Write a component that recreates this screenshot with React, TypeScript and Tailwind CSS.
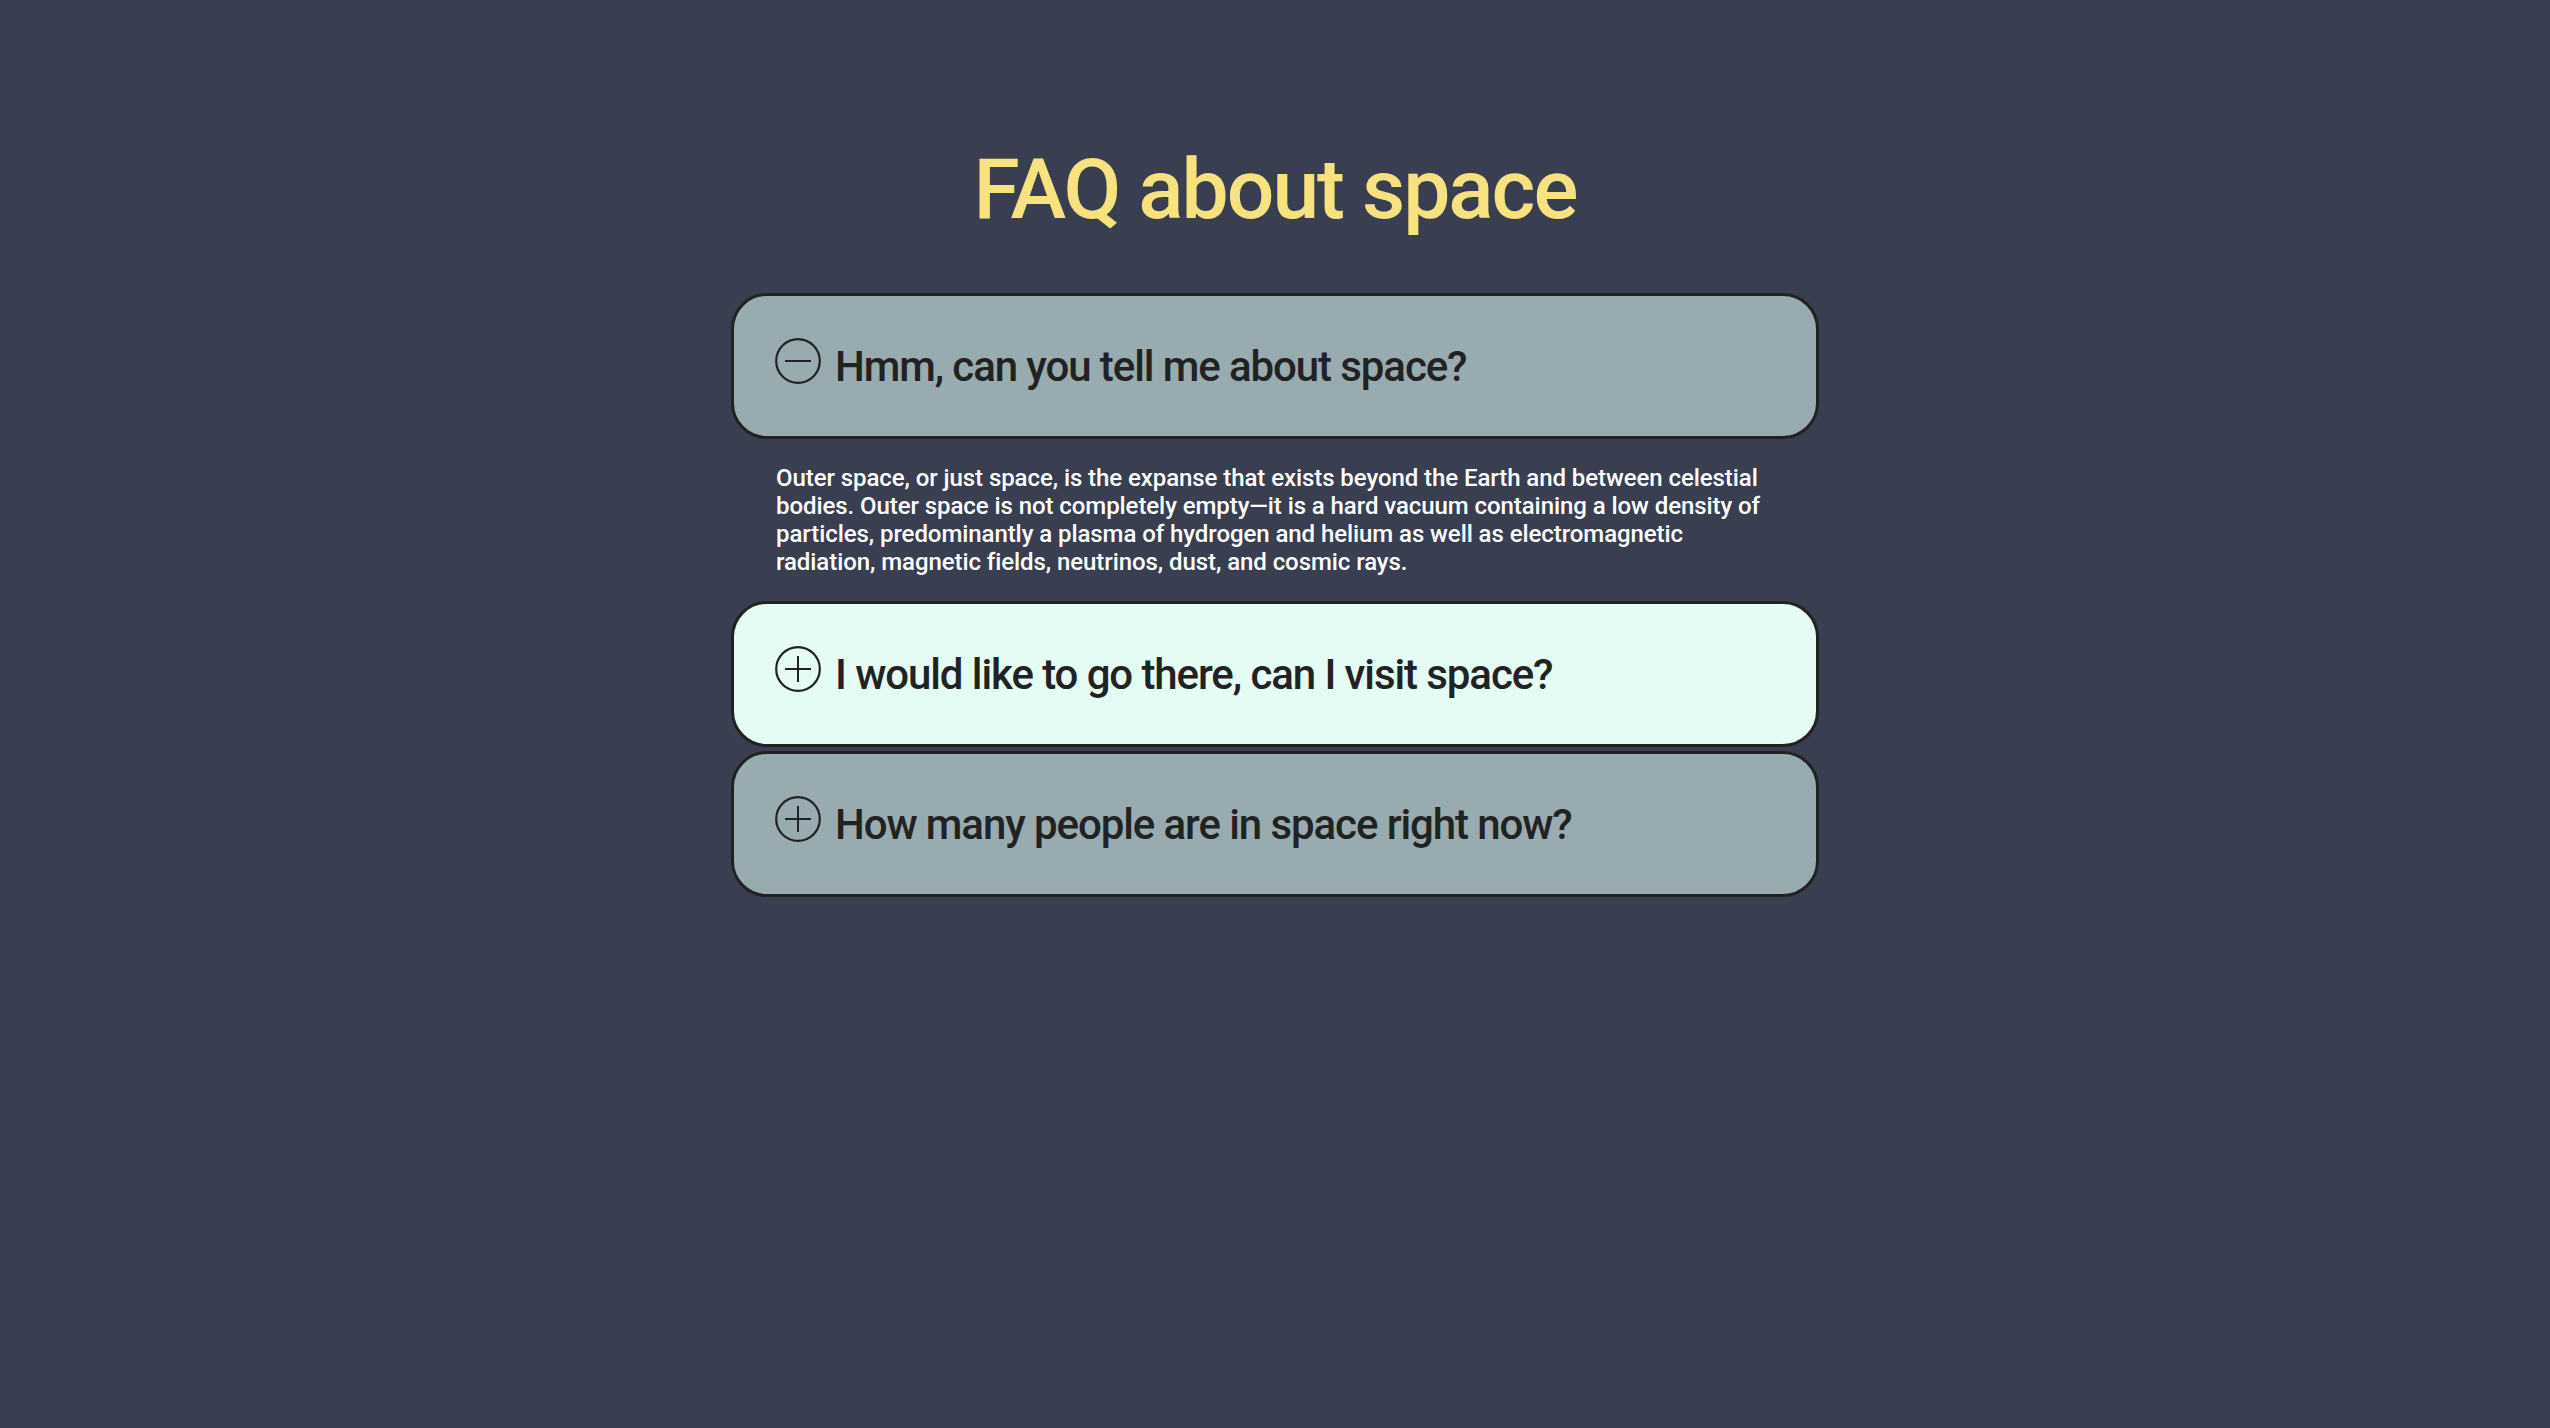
import { useState } from 'react';

type Faq = {
  id: number;
  question: string;
  answer: string;
};

const faqs: Faq[] = [
  {
    id: 1,
    question: 'Hmm, can you tell me about space?',
    answer:
      'Outer space, or just space, is the expanse that exists beyond the Earth and between celestial bodies. Outer space is not completely empty\u2014it is a hard vacuum containing a low density of particles, predominantly a plasma of hydrogen and helium as well as electromagnetic radiation, magnetic fields, neutrinos, dust, and cosmic rays.',
  },
  {
    id: 2,
    question: 'I would like to go there, can I visit space?',
    answer:
      'Yes, a few private companies now sell trips to space, though tickets are expensive and seats are limited.',
  },
  {
    id: 3,
    question: 'How many people are in space right now?',
    answer: 'Usually around ten people are living and working in orbit at any given time.',
  },
];

function ToggleIcon({ open }: { open: boolean }) {
  return (
    <svg width="46" height="46" viewBox="0 0 46 46" fill="none" className="flex-shrink-0 mb-[10px]">
      <circle cx="23" cy="23" r="21.8" stroke="#222" strokeWidth="2.2" />
      <line x1="10" y1="23" x2="36" y2="23" stroke="#222" strokeWidth="2" />
      {!open && <line x1="23" y1="10" x2="23" y2="36" stroke="#222" strokeWidth="2" />}
    </svg>
  );
}

function App() {
  const [openId, setOpenId] = useState<number | null>(1);
  const [hoverId] = useState<number | null>(2);

  return (
    <div className="min-h-screen bg-[#393e51] font-['Roboto',sans-serif] flex flex-col items-center pt-[148px]">
      <h1 className="text-[84px] leading-none font-medium tracking-[-0.024em] text-[#f7e27f]">FAQ about space</h1>

      <div className="w-[1088px] mt-[61px] flex flex-col">
        {faqs.map((faq) => {
          const open = openId === faq.id;
          const light = hoverId === faq.id && !open;
          return (
            <div key={faq.id} className="flex flex-col mb-[4px]">
              <button
                onClick={() => setOpenId(open ? null : faq.id)}
                className={`h-[146px] w-full flex items-center gap-[14px] pl-[41px] pr-8 rounded-[36px] border-[3px] border-[#222] text-left ${
                  light ? 'bg-[#e4fcf3]' : 'bg-[#98abb0]'
                }`}
              >
                <ToggleIcon open={open} />
                <span className="mt-[2px] text-[42px] leading-none font-medium tracking-[-0.026em] text-[#222]">
                  {faq.question}
                </span>
              </button>
              {open && (
                <p className="pl-[45px] pr-[44px] pt-[25px] pb-[21px] text-[24px] leading-[28px] font-medium tracking-[-0.003em] text-white">
                  {faq.answer}
                </p>
              )}
            </div>
          );
        })}
      </div>
    </div>
  );
}

export default App;
